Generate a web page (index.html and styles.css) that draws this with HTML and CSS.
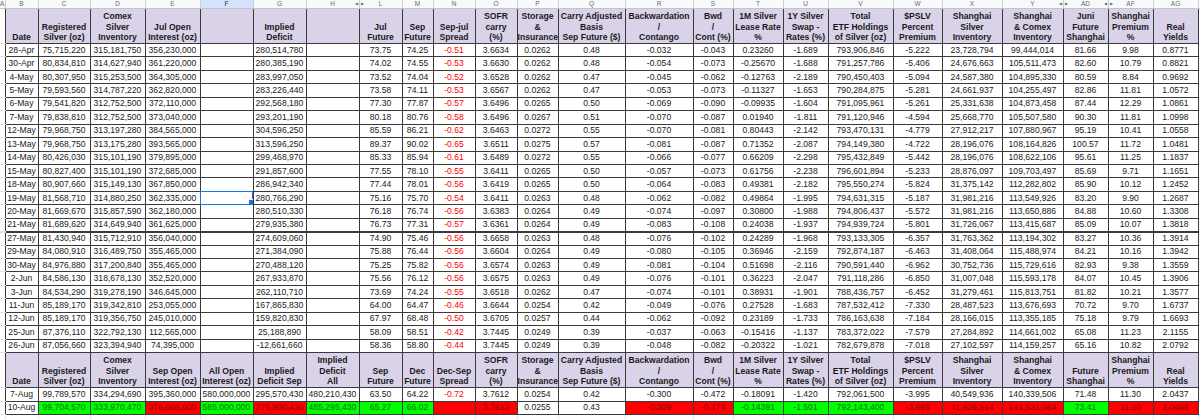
FILE: index.html
```html
<!DOCTYPE html>
<html>
<head>
<meta charset="utf-8">
<link rel="stylesheet" href="styles.css">
</head>
<body>
<table class="sheet">
<colgroup>
<col class="wA"><col class="wB"><col class="wC"><col class="wD"><col class="wE"><col class="wF"><col class="wG"><col class="wH"><col class="wL"><col class="wM"><col class="wN"><col class="wO"><col class="wP"><col class="wQ"><col class="wR"><col class="wS"><col class="wT"><col class="wU"><col class="wV"><col class="wW"><col class="wX"><col class="wY"><col class="wAD"><col class="wAF"><col class="wAG"><col class="wAH">
</colgroup>
<tr class="letters">
<th><span class="lt">A</span></th><th><span class="lt">B</span></th><th><span class="lt">C</span></th><th><span class="lt">D</span></th><th><span class="lt">E</span></th><th class="sel"><span class="lt">F</span></th><th><span class="lt">G</span></th><th><span class="lt">H</span><span class="hid hr">&#9664;</span></th><th><span class="hid hl">&#9654;</span><span class="lt">L</span></th><th><span class="lt">M</span></th><th><span class="lt">N</span></th><th><span class="lt">O</span></th><th><span class="lt">P</span></th><th><span class="lt">Q</span></th><th><span class="lt">R</span></th><th><span class="lt">S</span></th><th><span class="lt">T</span></th><th><span class="lt">U</span></th><th><span class="lt">V</span></th><th><span class="lt">W</span></th><th><span class="lt">X</span></th><th><span class="lt">Y</span><span class="hid hr">&#9664;</span></th><th><span class="hid hl">&#9654;</span><span class="lt">AD</span><span class="hid hr">&#9664;</span></th><th><span class="hid hl">&#9654;</span><span class="lt">AF</span></th><th><span class="lt">AG</span></th><th></th>
</tr>
<tr class="hdr">
<td class="a"></td><td>Date</td><td>Registered<br>Silver (oz)</td><td>Comex<br>Silver<br>Inventory</td><td>Jul Open<br>Interest (oz)</td><td></td><td>Implied<br>Deficit</td><td></td><td>Jul<br>Future</td><td>Sep<br>Future</td><td>Sep-jul<br>Spread</td><td>SOFR<br>carry<br>(%)</td><td>Storage<br>&amp;<br>Insurance</td><td>Carry Adjusted<br>Basis<br>Sep Future ($)</td><td>Backwardation<br>/<br>Contango</td><td>Bwd<br>/<br>Cont (%)</td><td>1M Silver<br>Lease Rate<br>%</td><td>1Y Silver<br>Swap -<br>Rates (%)</td><td>Total<br>ETF Holdings<br>of Silver (oz)</td><td>$PSLV<br>Percent<br>Premium</td><td>Shanghai<br>Silver<br>Inventory</td><td>Shanghai<br>&amp; Comex<br>Inventory</td><td>Juni<br>Future<br>Shanghai</td><td>Shanghai<br>Premium<br>%</td><td>Real<br>Yields</td><td class="a"></td>
</tr>
<tr class="row"><td class="a"></td><td>28-Apr</td><td>75,715,220</td><td>315,181,750</td><td>356,230,000</td><td></td><td>280,514,780</td><td></td><td>73.75</td><td>74.25</td><td class="neg">-0.51</td><td>3.6634</td><td>0.0262</td><td>0.48</td><td>-0.032</td><td>-0.043</td><td>0.23260</td><td>-1.689</td><td>793,906,846</td><td>-5.222</td><td>23,728,794</td><td>99,444,014</td><td>81.66</td><td>9.98</td><td>0.8771</td><td class="a"></td></tr>
<tr class="row"><td class="a"></td><td>30-Apr</td><td>80,834,810</td><td>314,627,940</td><td>361,220,000</td><td></td><td>280,385,190</td><td></td><td>74.02</td><td>74.55</td><td class="neg">-0.53</td><td>3.6630</td><td>0.0262</td><td>0.48</td><td>-0.054</td><td>-0.073</td><td>-0.25670</td><td>-1.688</td><td>791,257,786</td><td>-5.406</td><td>24,676,663</td><td>105,511,473</td><td>82.60</td><td>10.79</td><td>0.8821</td><td class="a"></td></tr>
<tr class="row"><td class="a"></td><td>4-May</td><td>80,307,950</td><td>315,253,500</td><td>364,305,000</td><td></td><td>283,997,050</td><td></td><td>73.52</td><td>74.04</td><td class="neg">-0.52</td><td>3.6528</td><td>0.0262</td><td>0.47</td><td>-0.045</td><td>-0.062</td><td>-0.12763</td><td>-2.189</td><td>790,450,403</td><td>-5.094</td><td>24,587,380</td><td>104,895,330</td><td>80.59</td><td>8.84</td><td>0.9692</td><td class="a"></td></tr>
<tr class="row"><td class="a"></td><td>5-May</td><td>79,593,560</td><td>314,787,220</td><td>362,820,000</td><td></td><td>283,226,440</td><td></td><td>73.58</td><td>74.11</td><td class="neg">-0.53</td><td>3.6567</td><td>0.0262</td><td>0.47</td><td>-0.053</td><td>-0.073</td><td>-0.11327</td><td>-1.653</td><td>790,284,875</td><td>-5.281</td><td>24,661,937</td><td>104,255,497</td><td>82.86</td><td>11.81</td><td>1.0572</td><td class="a"></td></tr>
<tr class="row"><td class="a"></td><td>6-May</td><td>79,541,820</td><td>312,752,500</td><td>372,110,000</td><td></td><td>292,568,180</td><td></td><td>77.30</td><td>77.87</td><td class="neg">-0.57</td><td>3.6496</td><td>0.0265</td><td>0.50</td><td>-0.069</td><td>-0.090</td><td>-0.09935</td><td>-1.604</td><td>791,095,961</td><td>-5.261</td><td>25,331,638</td><td>104,873,458</td><td>87.44</td><td>12.29</td><td>1.0861</td><td class="a"></td></tr>
<tr class="row"><td class="a"></td><td>7-May</td><td>79,838,810</td><td>312,752,500</td><td>373,040,000</td><td></td><td>293,201,190</td><td></td><td>80.18</td><td>80.76</td><td class="neg">-0.58</td><td>3.6496</td><td>0.0267</td><td>0.51</td><td>-0.070</td><td>-0.087</td><td>0.01940</td><td>-1.811</td><td>791,120,946</td><td>-4.594</td><td>25,668,770</td><td>105,507,580</td><td>90.30</td><td>11.81</td><td>1.0998</td><td class="a"></td></tr>
<tr class="row"><td class="a"></td><td>12-May</td><td>79,968,750</td><td>313,197,280</td><td>384,565,000</td><td></td><td>304,596,250</td><td></td><td>85.59</td><td>86.21</td><td class="neg">-0.62</td><td>3.6463</td><td>0.0272</td><td>0.55</td><td>-0.070</td><td>-0.081</td><td>0.80443</td><td>-2.142</td><td>793,470,131</td><td>-4.779</td><td>27,912,217</td><td>107,880,967</td><td>95.19</td><td>10.41</td><td>1.0558</td><td class="a"></td></tr>
<tr class="row"><td class="a"></td><td>13-May</td><td>79,968,750</td><td>313,175,280</td><td>393,565,000</td><td></td><td>313,596,250</td><td></td><td>89.37</td><td>90.02</td><td class="neg">-0.65</td><td>3.6511</td><td>0.0275</td><td>0.57</td><td>-0.081</td><td>-0.087</td><td>0.71352</td><td>-2.087</td><td>794,149,380</td><td>-4.722</td><td>28,196,076</td><td>108,164,826</td><td>100.57</td><td>11.72</td><td>1.0481</td><td class="a"></td></tr>
<tr class="row"><td class="a"></td><td>14-May</td><td>80,426,030</td><td>315,101,190</td><td>379,895,000</td><td></td><td>299,468,970</td><td></td><td>85.33</td><td>85.94</td><td class="neg">-0.61</td><td>3.6489</td><td>0.0272</td><td>0.55</td><td>-0.066</td><td>-0.077</td><td>0.66209</td><td>-2.298</td><td>795,432,849</td><td>-5.442</td><td>28,196,076</td><td>108,622,106</td><td>95.61</td><td>11.25</td><td>1.1837</td><td class="a"></td></tr>
<tr class="row"><td class="a"></td><td>15-May</td><td>80,827,400</td><td>315,101,190</td><td>372,685,000</td><td></td><td>291,857,600</td><td></td><td>77.55</td><td>78.10</td><td class="neg">-0.55</td><td>3.6411</td><td>0.0265</td><td>0.50</td><td>-0.057</td><td>-0.073</td><td>0.61756</td><td>-2.238</td><td>796,601,894</td><td>-5.233</td><td>28,876,097</td><td>109,703,497</td><td>85.69</td><td>9.71</td><td>1.1651</td><td class="a"></td></tr>
<tr class="row"><td class="a"></td><td>18-May</td><td>80,907,660</td><td>315,149,130</td><td>367,850,000</td><td></td><td>286,942,340</td><td></td><td>77.44</td><td>78.01</td><td class="neg">-0.56</td><td>3.6419</td><td>0.0265</td><td>0.50</td><td>-0.064</td><td>-0.083</td><td>0.49381</td><td>-2.182</td><td>795,550,274</td><td>-5.824</td><td>31,375,142</td><td>112,282,802</td><td>85.90</td><td>10.12</td><td>1.2452</td><td class="a"></td></tr>
<tr class="row"><td class="a"></td><td>19-May</td><td>81,568,710</td><td>314,880,250</td><td>362,335,000</td><td class="cursor"><span class="handle"></span></td><td>280,766,290</td><td></td><td>75.16</td><td>75.70</td><td class="neg">-0.54</td><td>3.6411</td><td>0.0263</td><td>0.48</td><td>-0.062</td><td>-0.082</td><td>0.49864</td><td>-1.995</td><td>794,631,315</td><td>-5.187</td><td>31,981,216</td><td>113,549,926</td><td>83.20</td><td>9.90</td><td>1.2687</td><td class="a"></td></tr>
<tr class="row"><td class="a"></td><td>20-May</td><td>81,669,670</td><td>315,857,590</td><td>362,180,000</td><td></td><td>280,510,330</td><td></td><td>76.18</td><td>76.74</td><td class="neg">-0.56</td><td>3.6383</td><td>0.0264</td><td>0.49</td><td>-0.074</td><td>-0.097</td><td>0.30800</td><td>-1.988</td><td>794,806,437</td><td>-5.572</td><td>31,981,216</td><td>113,650,886</td><td>84.88</td><td>10.60</td><td>1.3308</td><td class="a"></td></tr>
<tr class="row"><td class="a"></td><td>21-May</td><td>81,689,620</td><td>314,649,940</td><td>361,625,000</td><td></td><td>279,935,380</td><td></td><td>76.73</td><td>77.31</td><td class="neg">-0.57</td><td>3.6361</td><td>0.0264</td><td>0.49</td><td>-0.083</td><td>-0.108</td><td>0.24038</td><td>-1.937</td><td>794,939,724</td><td>-5.801</td><td>31,726,067</td><td>113,415,687</td><td>85.09</td><td>10.07</td><td>1.3818</td><td class="a"></td></tr>
<tr class="row gap"><td class="a"></td><td>27-May</td><td>81,430,940</td><td>315,712,910</td><td>356,040,000</td><td></td><td>274,609,060</td><td></td><td>74.90</td><td>75.46</td><td class="neg">-0.56</td><td>3.6658</td><td>0.0263</td><td>0.48</td><td>-0.076</td><td>-0.102</td><td>0.24289</td><td>-1.968</td><td>793,133,305</td><td>-6.357</td><td>31,763,362</td><td>113,194,302</td><td>83.27</td><td>10.36</td><td>1.3914</td><td class="a"></td></tr>
<tr class="row"><td class="a"></td><td>29-May</td><td>84,080,910</td><td>316,489,750</td><td>355,465,000</td><td></td><td>271,384,090</td><td></td><td>75.88</td><td>76.44</td><td class="neg">-0.56</td><td>3.6604</td><td>0.0264</td><td>0.49</td><td>-0.080</td><td>-0.105</td><td>0.36946</td><td>-2.159</td><td>792,874,187</td><td>-6.463</td><td>31,408,064</td><td>115,488,974</td><td>84.21</td><td>10.16</td><td>1.3942</td><td class="a"></td></tr>
<tr class="row"><td class="a"></td><td>30-May</td><td>84,976,880</td><td>317,200,840</td><td>355,465,000</td><td></td><td>270,488,120</td><td></td><td>75.25</td><td>75.82</td><td class="neg">-0.56</td><td>3.6574</td><td>0.0263</td><td>0.49</td><td>-0.081</td><td>-0.104</td><td>0.51698</td><td>-2.116</td><td>790,591,440</td><td>-6.962</td><td>30,752,736</td><td>115,729,616</td><td>82.93</td><td>9.38</td><td>1.3559</td><td class="a"></td></tr>
<tr class="row"><td class="a"></td><td>2-Jun</td><td>84,586,130</td><td>318,678,130</td><td>352,520,000</td><td></td><td>267,933,870</td><td></td><td>75.56</td><td>76.12</td><td class="neg">-0.56</td><td>3.6575</td><td>0.0263</td><td>0.49</td><td>-0.076</td><td>-0.101</td><td>0.36223</td><td>-2.047</td><td>791,118,286</td><td>-6.850</td><td>31,007,048</td><td>115,593,178</td><td>84.07</td><td>10.45</td><td>1.3906</td><td class="a"></td></tr>
<tr class="row"><td class="a"></td><td>3-Jun</td><td>84,534,290</td><td>319,278,190</td><td>346,645,000</td><td></td><td>262,110,710</td><td></td><td>73.69</td><td>74.24</td><td class="neg">-0.55</td><td>3.6518</td><td>0.0262</td><td>0.47</td><td>-0.074</td><td>-0.101</td><td>0.38931</td><td>-1.901</td><td>788,436,757</td><td>-6.452</td><td>31,279,461</td><td>115,813,751</td><td>81.82</td><td>10.21</td><td>1.3577</td><td class="a"></td></tr>
<tr class="row"><td class="a"></td><td>11-Jun</td><td>85,189,170</td><td>319,342,810</td><td>253,055,000</td><td></td><td>167,865,830</td><td></td><td>64.00</td><td>64.47</td><td class="neg">-0.46</td><td>3.6644</td><td>0.0254</td><td>0.42</td><td>-0.049</td><td>-0.076</td><td>0.27528</td><td>-1.683</td><td>787,532,412</td><td>-7.330</td><td>28,487,523</td><td>113,676,693</td><td>70.72</td><td>9.70</td><td>1.6737</td><td class="a"></td></tr>
<tr class="row"><td class="a"></td><td>12-Jun</td><td>85,189,170</td><td>319,356,750</td><td>245,010,000</td><td></td><td>159,820,830</td><td></td><td>67.97</td><td>68.48</td><td class="neg">-0.50</td><td>3.6705</td><td>0.0257</td><td>0.44</td><td>-0.062</td><td>-0.092</td><td>0.23189</td><td>-1.733</td><td>786,163,638</td><td>-7.184</td><td>28,166,015</td><td>113,355,185</td><td>75.18</td><td>9.79</td><td>1.6693</td><td class="a"></td></tr>
<tr class="row"><td class="a"></td><td>25-Jun</td><td>87,376,110</td><td>322,792,130</td><td>112,565,000</td><td></td><td>25,188,890</td><td></td><td>58.09</td><td>58.51</td><td class="neg">-0.42</td><td>3.7445</td><td>0.0249</td><td>0.39</td><td>-0.037</td><td>-0.063</td><td>-0.15416</td><td>-1.137</td><td>783,372,022</td><td>-7.579</td><td>27,284,892</td><td>114,661,002</td><td>65.08</td><td>11.23</td><td>2.1155</td><td class="a"></td></tr>
<tr class="row"><td class="a"></td><td>26-Jun</td><td>87,056,660</td><td>323,394,940</td><td>74,395,000</td><td></td><td>-12,661,660</td><td></td><td>58.36</td><td>58.80</td><td class="neg">-0.44</td><td>3.7445</td><td>0.0249</td><td>0.39</td><td>-0.048</td><td>-0.082</td><td>-0.20322</td><td>-1.021</td><td>782,679,878</td><td>-7.018</td><td>27,102,597</td><td>114,159,257</td><td>65.16</td><td>10.82</td><td>2.0792</td><td class="a"></td></tr>
<tr class="hdr">
<td class="a"></td><td>Date</td><td>Registered<br>Silver (oz)</td><td>Comex<br>Silver<br>Inventory</td><td>Sep Open<br>Interest (oz)</td><td>All Open<br>Interest (oz)</td><td>Implied<br>Deficit Sep</td><td>Implied<br>Deficit<br>All</td><td>Sep<br>Future</td><td>Dec<br>Future</td><td>Dec-Sep<br>Spread</td><td>SOFR<br>carry<br>(%)</td><td>Storage<br>&amp;<br>Insurance</td><td>Carry Adjusted<br>Basis<br>Sep Future ($)</td><td>Backwardation<br>/<br>Contango</td><td>Bwd<br>/<br>Cont (%)</td><td>1M Silver<br>Lease Rate<br>%</td><td>1Y Silver<br>Swap -<br>Rates (%)</td><td>Total<br>ETF Holdings<br>of Silver (oz)</td><td>$PSLV<br>Percent<br>Premium</td><td>Shanghai<br>Silver<br>Inventory</td><td>Shanghai<br>&amp; Comex<br>Inventory</td><td>Future<br>Shanghai</td><td>Shanghai<br>Premium<br>%</td><td>Real<br>Yields</td><td class="a"></td>
</tr>
<tr class="row"><td class="a"></td><td>7-Aug</td><td>99,789,570</td><td>334,294,690</td><td>395,360,000</td><td>580,000,000</td><td>295,570,430</td><td>480,210,430</td><td>63.50</td><td>64.22</td><td class="neg">-0.72</td><td>3.7612</td><td>0.0254</td><td>0.42</td><td>-0.300</td><td>-0.472</td><td>-0.18091</td><td>-1.420</td><td>792,061,500</td><td>-3.995</td><td>40,549,936</td><td>140,339,506</td><td>71.48</td><td>11.30</td><td>2.0437</td><td class="a"></td></tr>
<tr class="row"><td class="a"></td><td>10-Aug</td><td class="up">99,704,570</td><td class="up">333,970,470</td><td class="dn">376,605,000</td><td class="up">585,000,000</td><td class="dn">276,900,430</td><td class="up">485,295,430</td><td class="up">65.27</td><td class="up">66.02</td><td class="dn"></td><td class="dn">3.7613</td><td>0.0255</td><td>0.43</td><td class="dn">-0.309</td><td class="dn">-0.474</td><td class="up">-0.14391</td><td class="up">-1.501</td><td class="up">792,143,400</td><td class="dn">-3.695</td><td class="dn">41,826,514</td><td class="dn">141,531,084</td><td class="up">73.41</td><td class="dn">11.20</td><td class="dn">2.0499</td><td class="a"></td></tr>
<tr class="blank"><td class="a"></td><td></td><td></td><td></td><td></td><td></td><td></td><td></td><td></td><td></td><td></td><td></td><td></td><td></td><td></td><td></td><td></td><td></td><td></td><td></td><td></td><td></td><td></td><td></td><td></td><td class="a"></td></tr>
</table>
</body>
</html>
```
FILE: styles.css
```css
html, body {
  margin: 0;
  padding: 0;
  background: #ffffff;
  overflow: hidden;
}

body {
  font-family: "Liberation Sans", Arial, sans-serif;
  font-size: 8.6px;
  color: #1a1a1a;
}

.sheet {
  border-collapse: collapse;
  table-layout: fixed;
  width: 1200px;
}

.wA { width: 5px; }
.wB { width: 33px; }
.wC { width: 52px; }
.wD { width: 55px; }
.wE { width: 55px; }
.wF { width: 53px; }
.wG { width: 53px; }
.wH { width: 53px; }
.wL { width: 43px; }
.wM { width: 31px; }
.wN { width: 42px; }
.wO { width: 42px; }
.wP { width: 41px; }
.wQ { width: 67px; }
.wR { width: 68px; }
.wS { width: 40px; }
.wT { width: 50px; }
.wU { width: 45px; }
.wV { width: 65px; }
.wW { width: 49px; }
.wX { width: 60px; }
.wY { width: 61px; }
.wAD { width: 45px; }
.wAF { width: 45px; }
.wAG { width: 45px; }
.wAH { width: 2px; }

.sheet td {
  padding: 0;
  white-space: nowrap;
  overflow: hidden;
  text-align: center;
  border: 1px solid #3a3a3a;
}

.sheet td.a {
  border-top-color: #e2e2e2;
  border-bottom-color: #e2e2e2;
  border-left: none;
}

.letters th {
  height: 8px;
  padding: 0;
  background: #f8f9fa;
  border-right: 1px solid #d0d0d0;
  border-bottom: 1px solid #c4c4c4;
  font-weight: normal;
  font-size: 6.5px;
  color: #6b6b6b;
  position: relative;
}

.letters th.sel {
  background: #d3e3fd;
  color: #303030;
}

.lt {
  display: block;
  height: 8px;
  line-height: 8px;
}

.hid {
  position: absolute;
  top: 0;
  font-size: 4px;
  line-height: 8px;
  color: #6b6b6b;
}

.hid.hr { right: 1px; }
.hid.hl { left: 1px; }

.hdr td {
  height: 33px;
  background: #d9d2e9;
  font-weight: bold;
  vertical-align: bottom;
  line-height: 10.2px;
  padding-bottom: 1px;
}

.hdr td.a {
  background: #ffffff;
}

.row {
  height: 13.45px;
}

.row td {
  line-height: 11px;
  vertical-align: middle;
}

.row.gap td {
  border-top-width: 2px;
}

.neg {
  color: #ff0000;
}

.sheet td.up {
  background: #00ff00;
  color: #0f6e0f;
}

.sheet td.dn {
  background: #ff0000;
  color: #8f0000;
}

.cursor {
  position: relative;
  outline: 1px solid #1a73e8;
  outline-offset: -1px;
}

.handle {
  position: absolute;
  right: -1px;
  bottom: -1px;
  width: 4px;
  height: 4px;
  background: #1a73e8;
  border: 1px solid #ffffff;
}

.blank td {
  height: 8px;
  border-color: #e2e2e2;
}
```
